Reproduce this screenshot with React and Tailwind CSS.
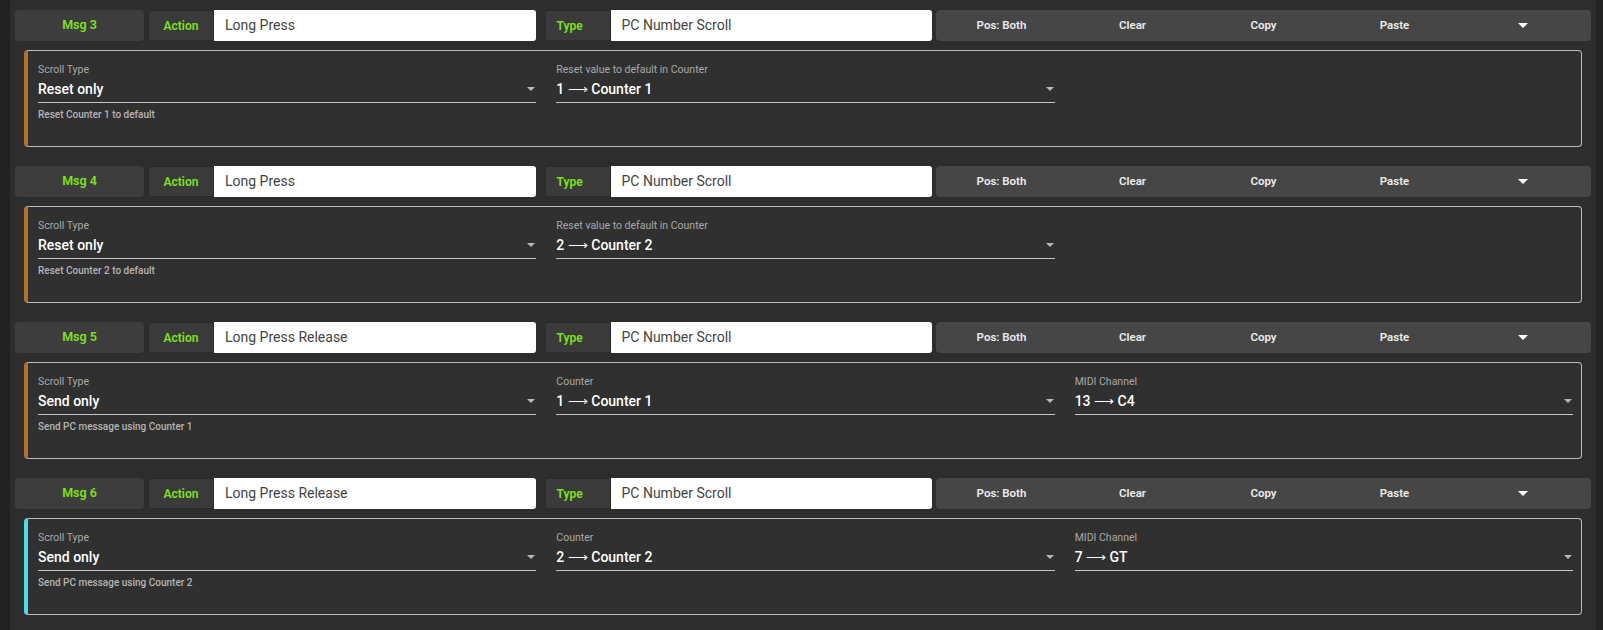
import React from 'react';

const messages = [
  {
    id: 3,
    action: 'Long Press',
    type: 'PC Number Scroll',
    accent: 'border-l-[#b3722f]',
    fields: [
      { label: 'Scroll Type', value: 'Reset only' },
      { label: 'Reset value to default in Counter', value: '1 ⟶ Counter 1' },
    ],
    helper: 'Reset Counter 1 to default',
  },
  {
    id: 4,
    action: 'Long Press',
    type: 'PC Number Scroll',
    accent: 'border-l-[#b3722f]',
    fields: [
      { label: 'Scroll Type', value: 'Reset only' },
      { label: 'Reset value to default in Counter', value: '2 ⟶ Counter 2' },
    ],
    helper: 'Reset Counter 2 to default',
  },
  {
    id: 5,
    action: 'Long Press Release',
    type: 'PC Number Scroll',
    accent: 'border-l-[#b3722f]',
    fields: [
      { label: 'Scroll Type', value: 'Send only' },
      { label: 'Counter', value: '1 ⟶ Counter 1' },
      { label: 'MIDI Channel', value: '13 ⟶ C4' },
    ],
    helper: 'Send PC message using Counter 1',
  },
  {
    id: 6,
    action: 'Long Press Release',
    type: 'PC Number Scroll',
    accent: 'border-l-[#4fdbe6]',
    fields: [
      { label: 'Scroll Type', value: 'Send only' },
      { label: 'Counter', value: '2 ⟶ Counter 2' },
      { label: 'MIDI Channel', value: '7 ⟶ GT' },
    ],
    helper: 'Send PC message using Counter 2',
  },
];

// small dropdown caret
function Caret({ className }) {
  return (
    <svg viewBox="0 0 10 5" className={className}>
      <path d="M0 0 L10 0 L5 5 Z" fill="currentColor" />
    </svg>
  );
}

function LabeledInput({ label, value, centered }) {
  return (
    <div className="flex flex-1 h-full">
      <div
        className={`w-[66px] h-full flex items-center bg-[#3a3a3a] border border-[#2a2a2a] rounded-l-[3px] text-[12px] font-semibold text-[#7ee21c] ${
          centered ? 'justify-center' : 'pl-[11px]'
        }`}
      >
        {label}
      </div>
      <div className="flex-1 h-full flex items-center bg-white rounded-r-[3px] pl-[11px] text-[14px] text-[#444444]">
        {value}
      </div>
    </div>
  );
}

function SelectField({ label, value, helper }) {
  return (
    <div className="flex flex-col">
      <div className="text-[10.5px] leading-[14px] text-[#a9a9a9]">{label}</div>
      <div className="h-[26px] flex items-center justify-between border-b border-[#c4c4c4] pb-[1px]">
        <span className="text-[14px] font-medium text-white">{value}</span>
        <Caret className="w-[8px] h-[4px] mr-[1px] text-[#b8b8b8]" />
      </div>
      {helper && (
        <div className="mt-[5px] text-[10px] leading-[14px] font-medium text-[#b5b5b5]">
          {helper}
        </div>
      )}
    </div>
  );
}

function MessageRow({ msg }) {
  return (
    <div className="mb-[19px]">
      {/* header bar */}
      <div className="flex h-[31px] gap-[4px]">
        <div className="w-[129px] h-full flex items-center justify-center bg-[#3d3d3d] rounded-[4px] text-[12.5px] font-semibold text-[#7ee21c]">
          Msg {msg.id}
        </div>
        <LabeledInput label="Action" value={msg.action} centered />
        <div className="w-px" />
        <LabeledInput label="Type" value={msg.type} />
        <div className="w-[655px] h-full grid grid-cols-5 items-center bg-[#464646] rounded-[4px] text-[11.5px] font-semibold text-[#ececec]">
          <span className="text-center">Pos: Both</span>
          <span className="text-center">Clear</span>
          <span className="text-center">Copy</span>
          <span className="text-center">Paste</span>
          <span className="flex justify-center pr-[6px]">
            <Caret className="w-[10px] h-[5px] text-white" />
          </span>
        </div>
      </div>

      {/* settings card */}
      <div
        className={`mt-[9px] mx-[9px] h-[97px] bg-[#303030] border border-[#bdbdbd] border-l-[4px] ${msg.accent} rounded-[4px] pl-[10px] pr-[8px] pt-[12px]`}
      >
        <div className="grid grid-cols-3 gap-x-[20px]">
          {msg.fields.map((f, i) => (
            <SelectField
              key={f.label}
              label={f.label}
              value={f.value}
              helper={i === 0 ? msg.helper : null}
            />
          ))}
        </div>
      </div>
    </div>
  );
}

export default function App() {
  return (
    <div
      className="flex h-[630px] overflow-hidden bg-[#2d2d2d]"
      style={{ fontFamily: 'Roboto, "Noto Sans", sans-serif' }}
    >
      <div className="w-[10px] bg-[#222222]" />
      <div className="flex-1 px-[5px] pt-[10px]">
        {messages.map((m) => (
          <MessageRow key={m.id} msg={m} />
        ))}
      </div>
      <div className="w-[7px] bg-[#232323]" />
    </div>
  );
}
